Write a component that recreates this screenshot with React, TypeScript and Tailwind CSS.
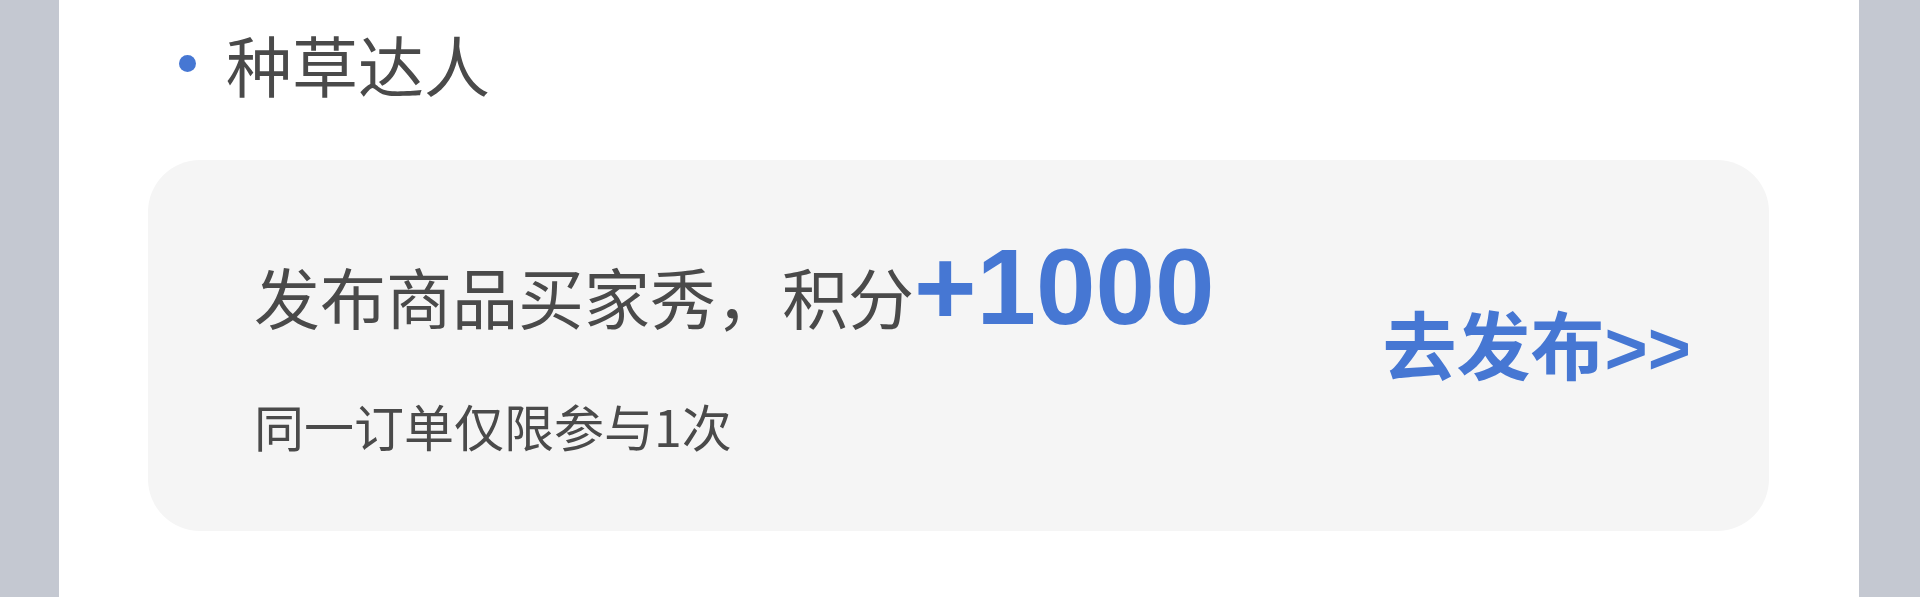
export default function App() {
  return (
    <div className="flex h-[597px] w-[1920px] overflow-hidden bg-[#c4c8d1]">
      <div className="w-[59px] shrink-0 bg-[#c4c8d1]" />
      <div className="flex flex-1 flex-col bg-white pl-[89px] pr-[90px] font-['Noto_Sans_CJK_SC',sans-serif]">
        {/* Section title */}
        <div className="flex h-[130px] items-center pb-[4px]">
          <span className="ml-[31px] h-[17px] w-[17px] shrink-0 rounded-full bg-[#4677d3]" />
          <span className="ml-[30px] text-[66px] leading-none text-[#4a4a4a]">种草达人</span>
        </div>

        {/* Task card */}
        <div className="mt-[30px] flex h-[371px] items-center justify-between rounded-[52px] bg-[#f5f5f5] pl-[106px] pr-[78px]">
          <div className="flex flex-col">
            <div className="flex items-baseline">
              <span className="text-[66px] leading-[90px] text-[#4a4a4a]">发布商品买家秀，积分</span>
              <span className="font-['Liberation_Sans',sans-serif] text-[107px] leading-[90px] font-bold text-[#4677d3]">
                +1000
              </span>
            </div>
            <div className="mt-[60px] text-[50px] leading-none text-[#4a4a4a]">同一订单仅限参与1次</div>
          </div>
          <div className="flex items-baseline text-[74px] leading-none font-bold text-[#4677d3]">
            <span>去发布</span>
            <span className="font-['Liberation_Sans',sans-serif]">&gt;&gt;</span>
          </div>
        </div>
      </div>
      <div className="w-[61px] shrink-0 bg-[#c4c8d1]" />
    </div>
  );
}
